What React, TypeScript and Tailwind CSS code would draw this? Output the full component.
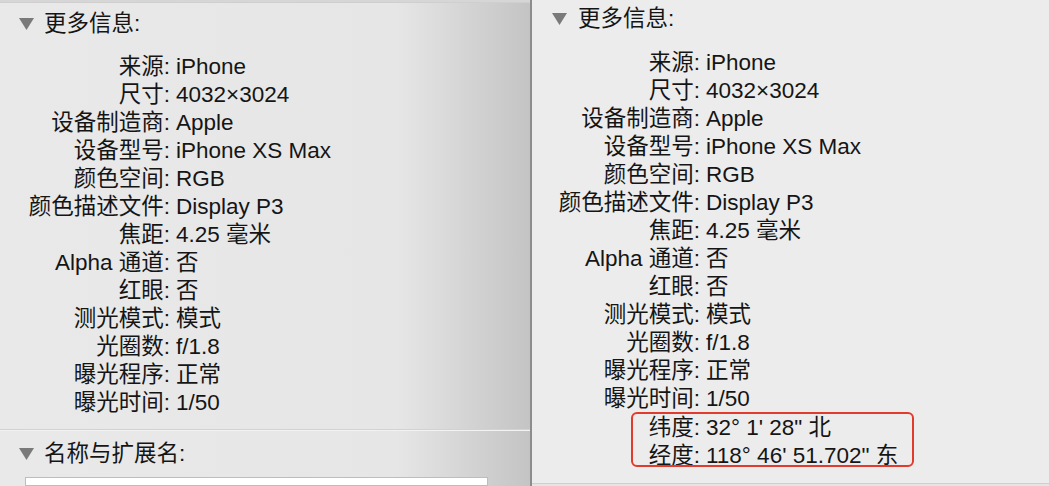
import React from "react";

const font = { fontFamily: '"Liberation Sans", "Noto Sans CJK SC", sans-serif' };

const rows: [string, string][] = [
  ["来源", "iPhone"],
  ["尺寸", "4032×3024"],
  ["设备制造商", "Apple"],
  ["设备型号", "iPhone XS Max"],
  ["颜色空间", "RGB"],
  ["颜色描述文件", "Display P3"],
  ["焦距", "4.25 毫米"],
  ["Alpha 通道", "否"],
  ["红眼", "否"],
  ["测光模式", "模式"],
  ["光圈数", "f/1.8"],
  ["曝光程序", "正常"],
  ["曝光时间", "1/50"],
];

function Triangle() {
  return (
    <svg width="15" height="12" viewBox="0 0 15 12" className="shrink-0">
      <path d="M0 0 H15 L7.5 12 Z" fill="#7a7a7a" />
    </svg>
  );
}

function Row({ label, value, labelW }: { label: string; value: string; labelW: string }) {
  return (
    <div className="flex h-[28px] items-center">
      <div className={`${labelW} shrink-0 whitespace-nowrap text-right`}>{label}:</div>
      <div className="pl-[6px] whitespace-nowrap">{value}</div>
    </div>
  );
}

export default function App() {
  return (
    <div style={font} className="flex h-[486px] w-[1049px] overflow-hidden text-[22.5px] leading-[28px] text-[#151515]">
      {/* left window (behind) */}
      <div className="flex w-[530px] shrink-0 flex-col bg-[linear-gradient(to_right,#e9e9e9_0%,#e6e6e6_75%,#c4c4c4_100%)]">
        <div className="h-[3px] bg-[#d6d6d6] border-b border-[#cfcfcf]" />
        <div className="flex h-[43px] items-center gap-[10px] pl-[19px] pt-[2px]">
          <Triangle />
          <span>更多信息:</span>
        </div>
        <div className="flex flex-col pt-[10px]">
          {rows.map(([l, v]) => (
            <Row key={l} label={l} value={v} labelW="w-[170px]" />
          ))}
        </div>
        <div className="mt-[12px] h-[2px] border-t border-[#d2d2d2] bg-[#f2f2f2]" />
        <div className="flex h-[44px] items-center gap-[10px] pl-[19px] pt-[5px]">
          <Triangle />
          <span>名称与扩展名:</span>
        </div>
        <div className="ml-[25px] mt-[5px] h-[10px] w-[463px] border border-[#bdbdbd] bg-white" />
      </div>
      <div className="w-[2px] shrink-0 bg-[#8c8c8c]" />
      {/* right window (front) */}
      <div className="flex flex-1 flex-col bg-[#ececec]">
        <div className="flex h-[38px] items-center gap-[11px] pl-[20px]">
          <Triangle />
          <span>更多信息:</span>
        </div>
        <div className="flex flex-col pt-[11px]">
          {rows.map(([l, v]) => (
            <Row key={l} label={l} value={v} labelW="w-[168px]" />
          ))}
          <div className="relative mt-[1px]">
            <Row label="纬度" value={'32° 1\' 28" 北'} labelW="w-[168px]" />
            <Row label="经度" value={'118° 46\' 51.702" 东'} labelW="w-[168px]" />
            <div className="pointer-events-none absolute left-[99px] top-[-2px] h-[55px] w-[283px] rounded-[6px] border-[2.5px] border-[#e23a2c]" />
          </div>
        </div>
        <div className="mt-auto h-[3px] border-t border-[#cfcfcf] bg-[#e4e4e4]" />
      </div>
    </div>
  );
}
